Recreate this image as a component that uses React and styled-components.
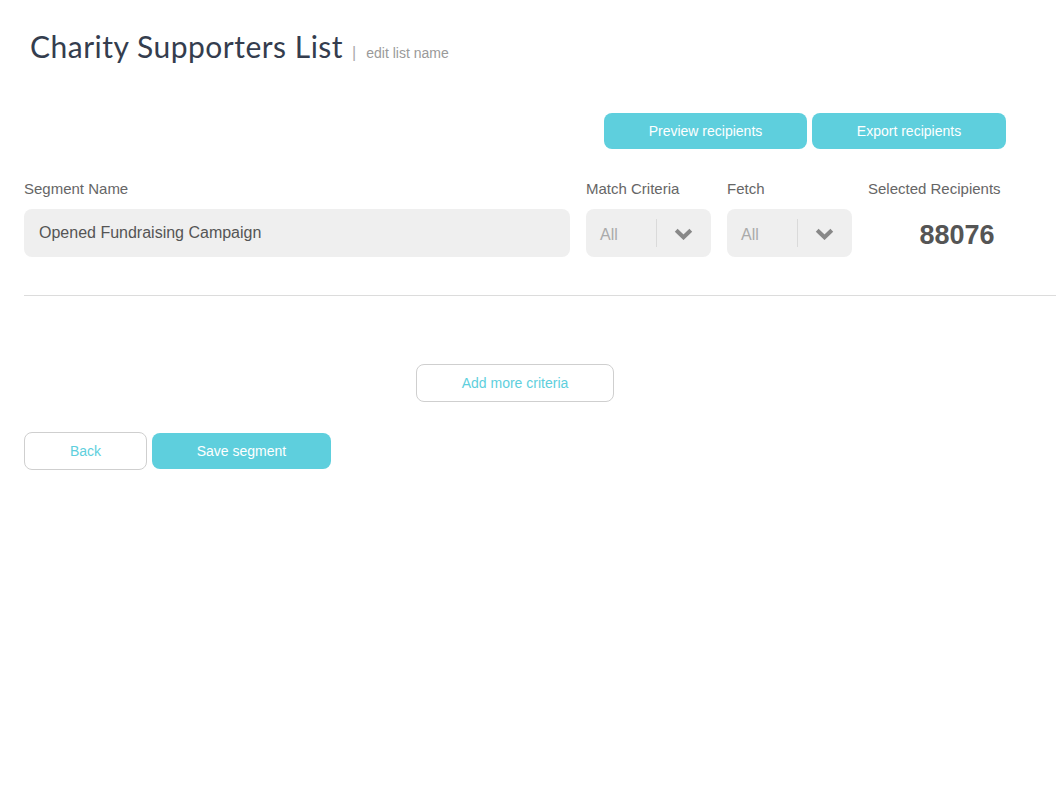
import React from 'react';
import styled, { createGlobalStyle } from 'styled-components';

const GlobalStyle = createGlobalStyle`
  body {
    margin: 0;
    background: #fff;
    font-family: 'Liberation Sans', Arial, sans-serif;
  }
`;

const Page = styled.div`
  padding: 28px 0 0 24px;
  width: 1032px;
`;

const TitleRow = styled.div`
  display: flex;
  align-items: baseline;
  padding-left: 6px;
`;

const Title = styled.h1`
  margin: 0;
  font-family: 'Lato', 'Noto Sans', sans-serif;
  font-weight: 400;
  font-size: 30px;
  color: #343d4e;
  letter-spacing: 0.5px;
`;

const Pipe = styled.span`
  color: #aaa;
  font-size: 16px;
  margin: 0 10px 0 9px;
`;

const EditLink = styled.a`
  color: #9a9a9a;
  font-size: 14px;
  text-decoration: none;
`;

const ActionBar = styled.div`
  display: flex;
  gap: 5px;
  margin-top: 49px;
  padding-left: 580px;
`;

const FillButton = styled.button`
  width: ${p => p.w}px;
  height: 36px;
  border: none;
  border-radius: 8px;
  background: #5ecfdd;
  color: #fff;
  font-family: 'Liberation Sans', Arial, sans-serif;
  font-size: 14px;
  cursor: pointer;
`;

const OutlineButton = styled.button`
  width: ${p => p.w}px;
  height: 38px;
  border: 1px solid #cfcfcf;
  border-radius: 8px;
  background: #fff;
  color: #5ecfdd;
  font-family: 'Liberation Sans', Arial, sans-serif;
  font-size: 14px;
  cursor: pointer;
`;

const FieldRow = styled.div`
  display: flex;
  gap: 16px;
  margin-top: 32px;
`;

const Field = styled.div`
  display: flex;
  flex-direction: column;
  width: ${p => p.w}px;
`;

const Label = styled.label`
  font-size: 15px;
  color: #666;
  line-height: 16px;
  margin-bottom: 12px;
`;

const TextInput = styled.input`
  box-sizing: border-box;
  height: 48px;
  border: none;
  border-radius: 8px;
  background: #efefef;
  padding: 0 15px;
  font-family: 'Liberation Sans', Arial, sans-serif;
  font-size: 16px;
  color: #555;
  outline: none;
`;

const SelectBox = styled.div`
  display: flex;
  align-items: center;
  height: 48px;
  border-radius: 8px;
  background: #efefef;
`;

const SelectValue = styled.span`
  flex: 1;
  padding-left: 14px;
  padding-top: 3px;
  font-size: 16px;
  color: #aaa;
`;

const SelectArrow = styled.span`
  display: flex;
  align-items: center;
  justify-content: center;
  width: 52px;
  height: 26px;
  border-left: 1px solid #dadada;
  padding-top: 2px;
  padding-right: 2px;
`;

const Count = styled.div`
  height: 48px;
  display: flex;
  align-items: center;
  justify-content: center;
  font-size: 27px;
  font-weight: 700;
  color: #555;
  padding-top: 2px;
`;

const Divider = styled.hr`
  margin: 36px 0 0 0;
  border: none;
  border-top: 1px solid #dcdcdc;
`;

const CriteriaRow = styled.div`
  display: flex;
  justify-content: center;
  margin-top: 68px;
  padding-right: 50px;
`;

const FooterRow = styled.div`
  display: flex;
  align-items: center;
  gap: 5px;
  margin-top: 30px;
`;

function Chevron() {
  return (
    <svg width="19" height="12" viewBox="0 0 19 12">
      <path d="M2.2 2.2 L9.5 9.3 L16.8 2.2" fill="none" stroke="#888" strokeWidth="4" strokeLinejoin="miter" />
    </svg>
  );
}

function Select({ value }) {
  return (
    <SelectBox>
      <SelectValue>{value}</SelectValue>
      <SelectArrow>
        <Chevron />
      </SelectArrow>
    </SelectBox>
  );
}

export default function App() {
  return (
    <>
      <GlobalStyle />
      <Page>
        <TitleRow>
          <Title>Charity Supporters List</Title>
          <Pipe>|</Pipe>
          <EditLink href="#">edit list name</EditLink>
        </TitleRow>

        <ActionBar>
          <FillButton w={203}>Preview recipients</FillButton>
          <FillButton w={194}>Export recipients</FillButton>
        </ActionBar>

        <FieldRow>
          <Field w={546}>
            <Label>Segment Name</Label>
            <TextInput defaultValue="Opened Fundraising Campaign" />
          </Field>
          <Field w={125}>
            <Label>Match Criteria</Label>
            <Select value="All" />
          </Field>
          <Field w={125}>
            <Label>Fetch</Label>
            <Select value="All" />
          </Field>
          <Field w={178}>
            <Label>Selected Recipients</Label>
            <Count>88076</Count>
          </Field>
        </FieldRow>

        <Divider />

        <CriteriaRow>
          <OutlineButton w={198}>Add more criteria</OutlineButton>
        </CriteriaRow>

        <FooterRow>
          <OutlineButton w={123}>Back</OutlineButton>
          <FillButton w={179}>Save segment</FillButton>
        </FooterRow>
      </Page>
    </>
  );
}
